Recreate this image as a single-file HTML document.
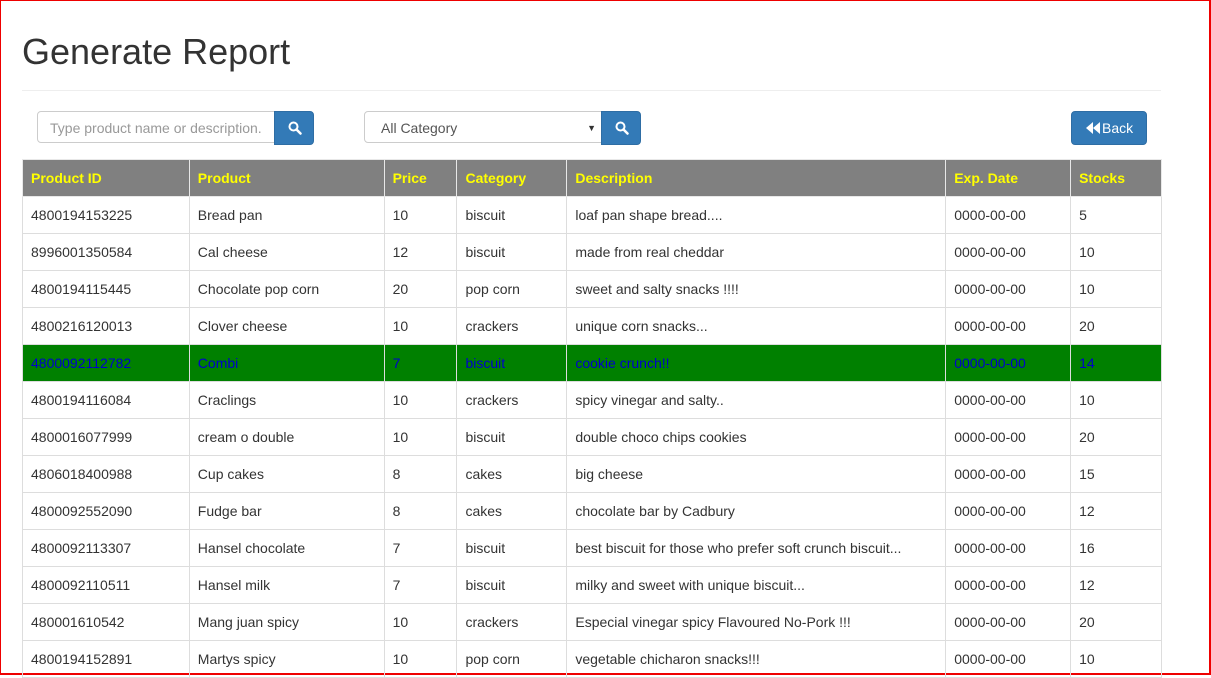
<!DOCTYPE html>
<html><head><style>
html,body{margin:0;padding:0;}
body{width:1211px;height:675px;overflow:hidden;font-family:"Liberation Sans",Arial,sans-serif;color:#333;background:#fff;position:relative;}
.frame{position:absolute;left:0;top:0;width:1208px;height:672px;border:1px solid #e00;border-right:2px solid #e00;border-bottom:2px solid #e00;}
h1{position:absolute;left:22px;top:30px;margin:0;font-size:36px;font-weight:400;color:#333;line-height:44px;}
.hr{position:absolute;left:22px;top:90px;width:1139px;height:1px;background:#eee;}
.inp{position:absolute;top:111px;height:32px;border:1px solid #ccc;border-radius:4px 0 0 4px;box-sizing:border-box;font-size:14px;line-height:32px;}
.btn{position:absolute;top:111px;height:34px;background:#337ab7;border:1px solid #2e6da4;box-sizing:border-box;border-radius:0 4px 4px 0;}
.btn svg{position:absolute;left:13px;top:9px;}
.back{position:absolute;left:1071px;top:111px;width:76px;height:34px;background:#337ab7;border:1px solid #2e6da4;box-sizing:border-box;border-radius:4px;color:#fff;font-size:14px;line-height:32px;}
table{position:absolute;left:22px;top:159px;border-collapse:collapse;width:1140px;font-size:14px;}
td,th{border:1px solid #ddd;padding:0 8px;height:36px;text-align:left;white-space:nowrap;}
th{background:#808080;color:#ff0;font-weight:bold;border-color:#e8e8e8;}
tr.g td{background:#008000;color:#0000cc;}
</style></head><body>
<div class="frame"></div>
<h1>Generate Report</h1>
<div class="hr"></div>
<div class="inp" style="left:37px;width:238px;padding-left:12px;color:#999;">Type product name or description.</div>
<div class="btn" style="left:274px;width:40px;"><svg width="14" height="14" viewBox="0 0 14 14"><circle cx="5.5" cy="5.5" r="4" fill="none" stroke="#fff" stroke-width="2"/><path d="M8.5 8.5L12.5 12.5" stroke="#fff" stroke-width="2.5" stroke-linecap="round"/></svg></div>
<div class="inp" style="left:364px;width:238px;padding-left:16px;color:#555;">All Category<span style="position:absolute;right:5px;font-size:9px;color:#333;">▼</span></div>
<div class="btn" style="left:601px;width:40px;"><svg width="14" height="14" viewBox="0 0 14 14"><circle cx="5.5" cy="5.5" r="4" fill="none" stroke="#fff" stroke-width="2"/><path d="M8.5 8.5L12.5 12.5" stroke="#fff" stroke-width="2.5" stroke-linecap="round"/></svg></div>
<div class="back"><svg width="14" height="12" viewBox="0 0 14 12" style="position:absolute;left:14px;top:10px;"><path d="M7 0L0 6L7 12Z M14 0L7 6L14 12Z" fill="#fff"/></svg><span style="position:absolute;left:30px;">Back</span></div>
<table>
<colgroup><col style="width:167px"><col style="width:195px"><col style="width:73px"><col style="width:110px"><col style="width:379px"><col style="width:125px"><col style="width:91px"></colgroup>
<tr><th>Product ID</th><th>Product</th><th>Price</th><th>Category</th><th>Description</th><th>Exp. Date</th><th>Stocks</th></tr>
<tr><td>4800194153225</td><td>Bread pan</td><td>10</td><td>biscuit</td><td>loaf pan shape bread....</td><td>0000-00-00</td><td>5</td></tr>
<tr><td>8996001350584</td><td>Cal cheese</td><td>12</td><td>biscuit</td><td>made from real cheddar</td><td>0000-00-00</td><td>10</td></tr>
<tr><td>4800194115445</td><td>Chocolate pop corn</td><td>20</td><td>pop corn</td><td>sweet and salty snacks !!!!</td><td>0000-00-00</td><td>10</td></tr>
<tr><td>4800216120013</td><td>Clover cheese</td><td>10</td><td>crackers</td><td>unique corn snacks...</td><td>0000-00-00</td><td>20</td></tr>
<tr class="g"><td>4800092112782</td><td>Combi</td><td>7</td><td>biscuit</td><td>cookie crunch!!</td><td>0000-00-00</td><td>14</td></tr>
<tr><td>4800194116084</td><td>Craclings</td><td>10</td><td>crackers</td><td>spicy vinegar and salty..</td><td>0000-00-00</td><td>10</td></tr>
<tr><td>4800016077999</td><td>cream o double</td><td>10</td><td>biscuit</td><td>double choco chips cookies</td><td>0000-00-00</td><td>20</td></tr>
<tr><td>4806018400988</td><td>Cup cakes</td><td>8</td><td>cakes</td><td>big cheese</td><td>0000-00-00</td><td>15</td></tr>
<tr><td>4800092552090</td><td>Fudge bar</td><td>8</td><td>cakes</td><td>chocolate bar by Cadbury</td><td>0000-00-00</td><td>12</td></tr>
<tr><td>4800092113307</td><td>Hansel chocolate</td><td>7</td><td>biscuit</td><td>best biscuit for those who prefer soft crunch biscuit...</td><td>0000-00-00</td><td>16</td></tr>
<tr><td>4800092110511</td><td>Hansel milk</td><td>7</td><td>biscuit</td><td>milky and sweet with unique biscuit...</td><td>0000-00-00</td><td>12</td></tr>
<tr><td>480001610542</td><td>Mang juan spicy</td><td>10</td><td>crackers</td><td>Especial vinegar spicy Flavoured No-Pork !!!</td><td>0000-00-00</td><td>20</td></tr>
<tr><td>4800194152891</td><td>Martys spicy</td><td>10</td><td>pop corn</td><td>vegetable chicharon snacks!!!</td><td>0000-00-00</td><td>10</td></tr>
</table>
</body></html>
